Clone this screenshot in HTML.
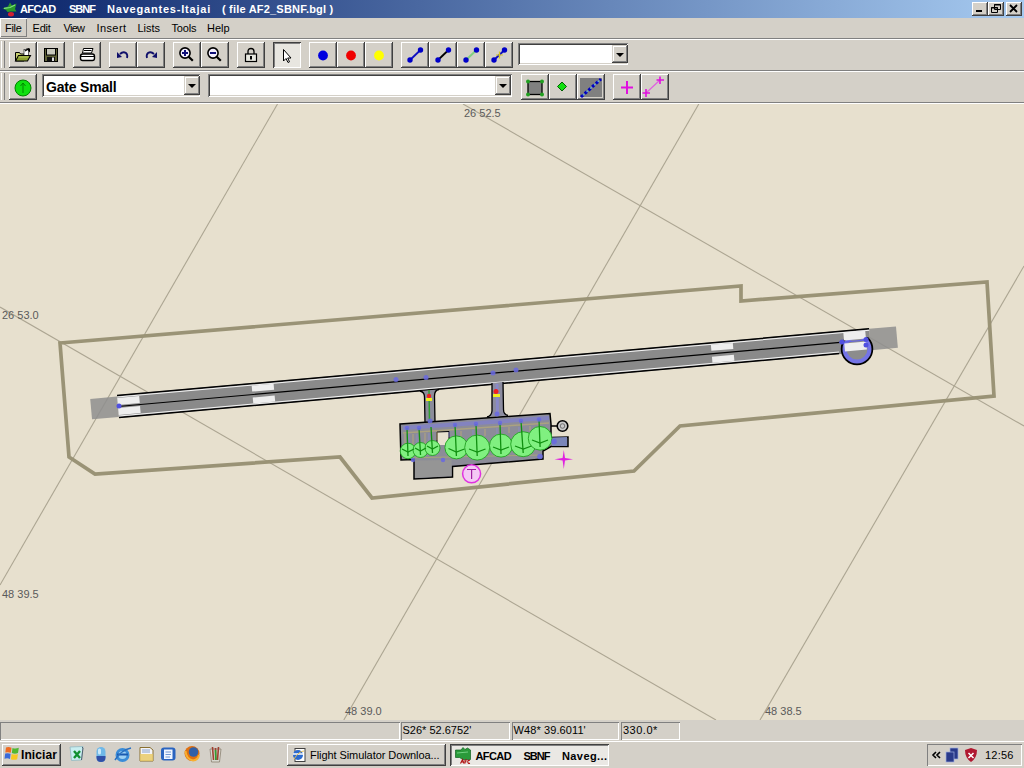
<!DOCTYPE html>
<html><head><meta charset="utf-8">
<style>
*{box-sizing:border-box}
html,body{margin:0;padding:0}
body{width:1024px;height:768px;overflow:hidden;position:relative;background:#D4D0C8;font-family:"Liberation Sans",sans-serif;font-size:11px;color:#000}
.a{position:absolute}
.t{position:absolute;white-space:nowrap;line-height:12px}
.btn{position:absolute;width:28px;height:26px;background:#D4D0C8;box-shadow:inset -1px -1px #404040,inset 1px 1px #fff,inset -2px -2px #808080}
.btn svg{position:absolute;left:0;top:0}
.prs{position:absolute;background:#E8E6E0;box-shadow:inset 1px 1px #404040,inset -1px -1px #fff,inset 2px 2px #808080}
.hl{position:absolute;left:0;width:1024px;height:1px}
.combo{position:absolute;background:#fff;box-shadow:inset 1px 1px #808080,inset -1px -1px #fff,inset 2px 2px #404040,inset -2px -2px #D4D0C8}
.dd{position:absolute;background:#D4D0C8;box-shadow:inset -1px -1px #404040,inset 1px 1px #D4D0C8,inset -2px -2px #808080,inset 2px 2px #fff}
.dd:after{content:"";position:absolute;left:4px;top:8px;border-left:4px solid transparent;border-right:4px solid transparent;border-top:4px solid #000}
.wb{position:absolute;top:2px;width:16px;height:14px;background:#D4D0C8;box-shadow:inset -1px -1px #404040,inset 1px 1px #fff,inset -2px -2px #808080}
.pane{position:absolute;top:722px;height:18px;box-shadow:inset 1px 1px #808080,inset -1px -1px #fff}
.tb{position:absolute;top:744px;height:22px;background:#D4D0C8;box-shadow:inset -1px -1px #404040,inset 1px 1px #fff,inset -2px -2px #808080}
</style></head><body>

<!-- title bar -->
<div class="a" style="left:0;top:0;width:1024px;height:18px;background:linear-gradient(to right,#0A246A,#A6CAF0)"></div>
<svg class="a" style="left:0;top:0" width="20" height="18" viewBox="0 0 20 18">
<path d="M2.5 8.5 L8 6.5 L10 2.5 L12 5.5 L16.5 3.5 L15 9 L16.5 11.5 L11 11.5 L7.5 12 L6 10 Z" fill="#2A9A2A"/>
<path d="M4 8.3 L10 7.5 L15 5" stroke="#80E080" stroke-width="1.2" fill="none"/>
<ellipse cx="11" cy="14.3" rx="3" ry="2.2" fill="#D02030"/>
</svg>
<div class="t" style="left:20px;top:3px;color:#fff;font-weight:bold;letter-spacing:-0.6px">AFCAD</div>
<div class="t" style="left:69px;top:3px;color:#fff;font-weight:bold;letter-spacing:-1px">SBNF</div>
<div class="t" style="left:107px;top:3px;color:#fff;font-weight:bold;letter-spacing:0.8px">Navegantes-Itajai</div>
<div class="t" style="left:222px;top:3px;color:#fff;font-weight:bold;letter-spacing:0.2px">( file AF2_SBNF.bgl )</div>
<div class="wb" style="left:972px"><div class="a" style="left:4px;top:8px;width:6px;height:2px;background:#000"></div></div>
<div class="wb" style="left:988px"><svg class="a" style="left:0;top:0" width="16" height="14"><path d="M6.5 2.5h6v5h-6z M6 3h7 M3.5 5.5h6v5h-6z M3 6h7" fill="none" stroke="#000" stroke-width="1"/></svg></div>
<div class="wb" style="left:1006px"><svg class="a" style="left:0;top:0" width="16" height="14"><path d="M4 3 L11 10 M11 3 L4 10" stroke="#000" stroke-width="1.8"/></svg></div>

<!-- menu bar -->
<div class="a" style="left:0;top:18px;width:27px;height:19px;box-shadow:inset 1px 1px #fff,inset -1px -1px #808080"></div>
<div class="t" style="left:5px;top:22px;letter-spacing:-0.3px">File</div>
<div class="t" style="left:32.5px;top:22px;letter-spacing:-0.2px">Edit</div>
<div class="t" style="left:63.5px;top:22px;letter-spacing:-0.7px">View</div>
<div class="t" style="left:96.5px;top:22px;letter-spacing:0.4px">Insert</div>
<div class="t" style="left:137.5px;top:22px">Lists</div>
<div class="t" style="left:171.5px;top:22px;letter-spacing:-0.2px">Tools</div>
<div class="t" style="left:207px;top:22px">Help</div>
<div class="hl" style="top:38px;background:#808080"></div>
<div class="hl" style="top:39px;background:#fff"></div>
<div class="hl" style="top:70px;background:#808080"></div>
<div class="hl" style="top:71px;background:#fff"></div>
<div class="hl" style="top:102px;background:#808080"></div>
<div class="hl" style="top:103px;background:#fff"></div>

<!-- toolbar1 grip -->
<div class="a" style="left:1px;top:41px;width:1px;height:27px;background:#fff"></div>
<div class="a" style="left:4px;top:41px;width:1px;height:27px;background:#808080"></div>
<div class="btn" style="left:9px;top:42px"><svg width="28" height="26" viewBox="-6 -6 28 26">
<path d="M0.5 13 L0.5 4.5 L4.5 4.5 L5.5 6 L9 6 L9 13 Z" fill="#C8D070" stroke="#000" stroke-width="1"/>
<rect x="9" y="1.5" width="4.5" height="6" fill="#fff" stroke="#404040" stroke-width="0.8"/>
<path d="M0.5 13 L3.5 7.5 H15.5 L12.5 13 Z" fill="#8CA030" stroke="#000" stroke-width="1.1"/>
<path d="M3.5 9 H13.5" stroke="#B8C860" stroke-width="1"/>
<path d="M11 0.5 L15 0.5 L15 4.5 Z" fill="#000"/><path d="M10 3 L14 0.5" stroke="#000" stroke-width="1.2"/>
</svg></div>
<div class="btn" style="left:37px;top:42px"><svg width="28" height="26" viewBox="-6 -6 28 26">
<rect x="1.5" y="0.5" width="13" height="13" fill="#5E6036" stroke="#000"/>
<rect x="3.5" y="0.5" width="9" height="6.5" fill="#C8C8BC" stroke="#000"/>
<rect x="4" y="9" width="8" height="4.5" fill="#101010"/>
<rect x="9" y="9.5" width="2" height="3.5" fill="#E0E0E0"/>
</svg></div>
<div class="btn" style="left:73px;top:42px"><svg width="28" height="26" viewBox="-6 -6 28 26">
<path d="M4.5 0.5 H14 L12.5 5 H3.5 Z" fill="#fff" stroke="#000"/>
<path d="M5 2.5 H12.5" stroke="#000"/>
<rect x="1.5" y="6" width="14" height="6.5" rx="2.2" fill="#fff" stroke="#000" stroke-width="1.4"/>
<path d="M2 8.5 H15" stroke="#000"/>
<path d="M3 12.5 H14" stroke="#000"/>
</svg></div>
<div class="btn" style="left:109px;top:42px"><svg width="28" height="26" viewBox="-6 -6 28 26">
<path d="M5 6 Q8 3 11 5 Q13 7 12 10" fill="none" stroke="#10106A" stroke-width="1.8"/>
<path d="M2 4 L7 9 L2 10 Z" fill="#10106A"/>
</svg></div>
<div class="btn" style="left:137px;top:42px"><svg width="28" height="26" viewBox="-6 -6 28 26">
<path d="M11 6 Q8 3 5 5 Q3 7 4 10" fill="none" stroke="#10106A" stroke-width="1.8"/>
<path d="M14 4 L9 9 L14 10 Z" fill="#10106A"/>
</svg></div>
<div class="btn" style="left:173px;top:42px"><svg width="28" height="26" viewBox="-6 -6 28 26">
<circle cx="6" cy="5" r="5.1" fill="#F4F0FF" stroke="#000" stroke-width="1.6"/>
<path d="M6 2 V8 M3 5 H9" stroke="#10107A" stroke-width="2"/>
<path d="M9.7 8.7 L13.8 12.8" stroke="#000" stroke-width="2.2"/>
</svg></div>
<div class="btn" style="left:201px;top:42px"><svg width="28" height="26" viewBox="-6 -6 28 26">
<circle cx="6" cy="5" r="5.1" fill="#F4F0FF" stroke="#000" stroke-width="1.6"/>
<path d="M3 5 H9" stroke="#10107A" stroke-width="2"/>
<path d="M9.7 8.7 L13.8 12.8" stroke="#000" stroke-width="2.2"/>
</svg></div>
<div class="btn" style="left:237px;top:42px"><svg width="28" height="26" viewBox="-6 -6 28 26">
<path d="M5 6 V3.5 Q5 0.5 8 0.5 Q11 0.5 11 3.5 V6" fill="none" stroke="#000" stroke-width="1.3"/>
<rect x="2.5" y="6" width="11" height="7.5" fill="#E8E8E0" stroke="#000" stroke-width="1.2"/>
<rect x="7" y="8" width="2" height="3.5" fill="#000"/>
</svg></div>
<div class="prs" style="left:273px;top:42px;width:28px;height:26px"><svg class="a" style="left:0;top:0" width="28" height="26" viewBox="-6 -6 28 26">
<path d="M4.5 1.5 V13 L7 10.5 L9 14.5 L10.5 13.8 L8.7 10 H12 Z" fill="#fff" stroke="#000" stroke-width="1"/>
</svg></div>
<div class="btn" style="left:309px;top:42px"><svg width="28" height="26" viewBox="-6 -6 28 26"><circle cx="8" cy="7.5" r="4.9" fill="#0000E0"/></svg></div>
<div class="btn" style="left:337px;top:42px"><svg width="28" height="26" viewBox="-6 -6 28 26"><circle cx="8" cy="7.5" r="4.9" fill="#F00000"/></svg></div>
<div class="btn" style="left:365px;top:42px"><svg width="28" height="26" viewBox="-6 -6 28 26"><circle cx="8" cy="7.5" r="4.9" fill="#FFFF00"/></svg></div>
<div class="btn" style="left:401px;top:42px"><svg width="28" height="26" viewBox="-6 -6 28 26"><path d="M3 12 L13.5 2" stroke="#1010C0" stroke-width="1.8"/><circle cx="3" cy="12" r="2.7" fill="#0000C8"/><circle cx="13.5" cy="2" r="2.7" fill="#0000C8"/></svg></div>
<div class="btn" style="left:429px;top:42px"><svg width="28" height="26" viewBox="-6 -6 28 26"><path d="M3 12 L13.5 2" stroke="#000" stroke-width="1.8"/><circle cx="3" cy="12" r="2.7" fill="#0000C8"/><circle cx="13.5" cy="2" r="2.7" fill="#0000C8"/></svg></div>
<div class="btn" style="left:457px;top:42px"><svg width="28" height="26" viewBox="-6 -6 28 26"><path d="M3 12 L13.5 2" stroke="#80D080" stroke-width="2"/><circle cx="3" cy="12" r="2.7" fill="#0000C8"/><circle cx="13.5" cy="2" r="2.7" fill="#0000C8"/></svg></div>
<div class="btn" style="left:485px;top:42px"><svg width="28" height="26" viewBox="-6 -6 28 26"><path d="M3 12 L13.5 2" stroke="#1010C0" stroke-width="1.8"/><path d="M8.5 3.5 V10.5 M5 7 H12" stroke="#D8C820" stroke-width="1.2"/><circle cx="3" cy="12" r="2.7" fill="#0000C8"/><circle cx="13.5" cy="2" r="2.7" fill="#0000C8"/></svg></div>
<div class="combo" style="left:518px;top:43px;width:110px;height:22px"></div>
<div class="dd" style="left:612px;top:45px;width:16px;height:18px"></div>

<!-- toolbar2 -->
<div class="a" style="left:1px;top:73px;width:1px;height:27px;background:#fff"></div>
<div class="a" style="left:4px;top:73px;width:1px;height:27px;background:#808080"></div>
<div class="btn" style="left:9px;top:74px"><svg width="28" height="26" viewBox="0 0 28 26">
<circle cx="14" cy="14" r="8" fill="#10E010" stroke="#008000" stroke-width="1"/>
<path d="M14 19 V9 M11.5 12 L14 9 L16.5 12" fill="none" stroke="#008800" stroke-width="1"/>
</svg></div>
<div class="combo" style="left:42px;top:74px;width:158px;height:23px"></div>
<div class="t" style="left:46px;top:79.5px;font-weight:bold;font-size:14px;line-height:15px;letter-spacing:-0.2px">Gate Small</div>
<div class="dd" style="left:184px;top:76px;width:16px;height:19px"></div>
<div class="combo" style="left:208px;top:74px;width:304px;height:23px"></div>
<div class="dd" style="left:495px;top:76px;width:16px;height:19px"></div>
<div class="btn" style="left:521px;top:74px"><svg width="28" height="26" viewBox="0 0 28 26">
<rect x="7" y="7.5" width="14" height="13" fill="#808080" stroke="#000" stroke-width="1.3"/>
<circle cx="7" cy="7.5" r="2" fill="#20A020"/><circle cx="21" cy="7.5" r="2" fill="#20A020"/><circle cx="7" cy="20.5" r="2" fill="#20A020"/><circle cx="21" cy="20.5" r="2" fill="#20A020"/>
</svg></div>
<div class="btn" style="left:549px;top:74px"><svg width="28" height="26" viewBox="0 0 28 26">
<path d="M13 8 L17.5 12.5 L13 17 L8.5 12.5 Z" fill="#10E010" stroke="#006000" stroke-width="1"/>
</svg></div>
<div class="btn" style="left:577px;top:74px"><svg width="28" height="26" viewBox="0 0 28 26">
<rect x="3" y="4" width="22" height="19" fill="#808080"/>
<path d="M4 23 L24 5" stroke="#0000C0" stroke-width="3" stroke-dasharray="3 2"/>
<path d="M4 23 L24 5" stroke="#60B0E0" stroke-width="1.2" stroke-dasharray="2 3" stroke-dashoffset="2.5"/>
</svg></div>
<div class="btn" style="left:613px;top:74px"><svg width="28" height="26" viewBox="0 0 28 26">
<path d="M14 7 V20 M8 13.5 H20" stroke="#E010E0" stroke-width="2"/>
</svg></div>
<div class="btn" style="left:641px;top:74px"><svg width="28" height="26" viewBox="0 0 28 26">
<path d="M5 19 L19 6" stroke="#E060E0" stroke-width="1.2"/>
<path d="M19 2.5 V10 M15.5 6 H23 M5 15 V23 M1.5 19 H9" stroke="#E010E0" stroke-width="1.6"/>
</svg></div>

<!-- map -->
<svg class="a" style="left:0;top:104px" width="1024" height="616" viewBox="0 104 1024 616">
<rect x="0" y="104" width="1024" height="616" fill="#E7E0CE"/>
<g stroke="#ACA592" stroke-width="1.1" fill="none">
<path d="M277.5 104 L0 585"/>
<path d="M698.8 104 L343.8 720"/>
<path d="M1024 266 L760 720"/>
<path d="M463 104 L1024 426"/>
<path d="M0 307 L716 720"/>
</g>
<polygon points="60,343 741,286 741,301 987,282 994,396 680,426 634,471 372,498 340,457 95,474 69,457" fill="none" stroke="#9A9376" stroke-width="3.7" stroke-linejoin="miter"/>
<!-- runway -->
<defs><clipPath id="cb"><rect x="820" y="337" width="80" height="40"/></clipPath></defs>
<g transform="translate(118 406.5) rotate(-5.071)">
<rect x="-27" y="-10" width="27" height="20.5" fill="#8E8E8E" fill-opacity="0.85"/>
<rect x="755" y="-11" width="27" height="21.5" fill="#8E8E8E" fill-opacity="0.85"/>
<rect x="0" y="-11.5" width="755" height="23" fill="#8A8A8A"/>
</g>
<g clip-path="url(#cb)">
<circle cx="857" cy="349" r="15" fill="#8C8C8C" stroke="#000" stroke-width="2.5"/>
<circle cx="857" cy="349" r="12.5" fill="none" stroke="#7474E6" stroke-width="4"/>
</g>
<g transform="translate(118 406.5) rotate(-5.071)">
<path d="M0 -11 H755 M0 11 H723" stroke="#000" stroke-width="1.5"/>
<path d="M0 -9.5 H755 M0 9.5 H723" stroke="#F4F4F4" stroke-width="1"/>
<path d="M0 0 H728" stroke="#000" stroke-width="1.2"/>
<g fill="#EEEEEE">
<rect x="0" y="-8.5" width="22" height="7"/><rect x="0" y="1.5" width="22" height="7"/>
<rect x="135" y="-9" width="22" height="6"/><rect x="135" y="3" width="22" height="6"/>
<rect x="596" y="-9" width="22" height="6"/><rect x="596" y="3" width="22" height="6"/>
<rect x="729" y="-9.5" width="22" height="8"/><rect x="729" y="1.5" width="22" height="8"/>
</g>
<path d="M724 0 H750" stroke="#6464E0" stroke-width="1.2"/>
</g>
<g fill="#5050E0"><circle cx="119" cy="406" r="2.5"/><circle cx="842" cy="342" r="2.5"/><circle cx="866" cy="339.5" r="2.5"/><circle cx="866" cy="345" r="2.5"/></g>
<!-- taxiways -->
<path d="M420 391 Q424.5 392 424.5 397 L425 423 L435 422 L434.5 396 Q434.5 390 439 389.5 Z" fill="#8C8C9A"/>
<path d="M420 391 Q424.5 392 424.5 397 L425 423 M439 389.5 Q434.5 390 434.5 396 L435 422" fill="none" stroke="#000" stroke-width="1.3"/>
<path d="M492 383 L492 411 Q491.5 416 487 417 L508 415.5 Q503.5 414.5 503.5 409.5 L503 382 Z" fill="#8C8CA0"/>
<path d="M492 383 L492 411 Q491.5 416 487 417 M508 415.5 Q503.5 414.5 503.5 409.5 L503 382" fill="none" stroke="#000" stroke-width="1.3"/>
<path d="M497 384 L497.5 414" stroke="#8888D8" stroke-width="3" stroke-opacity="0.7"/>
<!-- apron -->
<polygon points="400,424 550,413.5 551,424 551,437.5 568,437 568,446.5 551,446.5 543,451 543,459 452.5,466.5 452.5,477 414,479 414,459.5 401,460" fill="#8C8C98" stroke="#000" stroke-width="1.5"/>
<path d="M552 437.5 L567 437 L567 446 L552 446" fill="#7A86B8"/>
<path d="M415 460.5 L451.5 460 L451.5 476 L415 478 Z" fill="#959595"/>
<path d="M437 445 L437 432 L449 431.5 L449 445" fill="#E7E0CE" stroke="#000" stroke-width="1"/>
<path d="M403 428 L549 418" stroke="#7C7CE0" stroke-width="4" stroke-opacity="0.55"/>
<path d="M403 433 L549 423" stroke="#C0B070" stroke-width="1.5" stroke-opacity="0.6"/>
<g stroke-width="1.2" stroke-opacity="0.55">
<path d="M405 434 V446 M413 434 V446 M425 433 V445 M437 432 V440 M461 431 V437 M485 429 V436 M509 427 V433 M530 426 V431" stroke="#C8B070"/>
<path d="M409 434 V446 M417 434 V446 M429 433 V445 M449 432 V437 M473 430 V437 M497 428 V434 M519 427 V433" stroke="#8A8AD8"/>
</g>
<path d="M404 458 L540 455" stroke="#C0C060" stroke-width="1" stroke-opacity="0.5"/>
<path d="M551 426 L557.5 426" stroke="#000" stroke-width="1.5"/>
<circle cx="562.5" cy="426" r="5.3" fill="#C8C8C8" stroke="#000" stroke-width="1.6"/>
<circle cx="562.5" cy="426" r="2.3" fill="none" stroke="#707070" stroke-width="1"/>
<g fill="#80F080" stroke="#20A020" stroke-width="0.9">
<circle cx="408" cy="451" r="7.8"/><circle cx="420.5" cy="450" r="7.5"/><circle cx="432.5" cy="448" r="7.5"/>
<circle cx="456.4" cy="447.4" r="11.5"/><circle cx="477.2" cy="447.6" r="12.5"/><circle cx="501" cy="445.6" r="11.5"/>
<circle cx="523.2" cy="444.2" r="12.5"/><circle cx="540.1" cy="438.3" r="11.8"/>
</g>
<g stroke="#109010" stroke-width="1.3" fill="none">
<path d="M407 428 L408 456 M419 428 L420.5 455 M431 427 L432.5 453 M455 424.5 L456.4 456 M476 424 L477.2 456 M500 423 L501 454 M521 421 L523.2 453 M539 419.5 L540.1 447"/>
<path d="M402 449 L408 452 L414 449 M415 448 L420.5 451 L426 448 M427 446 L432.5 449 L438 446"/>
<path d="M448.5 448.5 L456.4 452 L464.5 449 M469 449 L477.2 452 L485.5 449 M493 447 L501 450 L509 447 M515 446 L523.2 449 L531.5 446 M532 440 L540.1 443 L548 440"/>
</g>
<g stroke="#30A030" stroke-width="1.5"><path d="M429 390 L429.5 422"/></g>
<g fill="#6868E0" fill-opacity="0.85">
<circle cx="396" cy="379.5" r="2.5"/><circle cx="426" cy="377.5" r="2.5"/><circle cx="493" cy="373" r="2.5"/><circle cx="516" cy="370" r="2.5"/>
<circle cx="430" cy="421" r="2.5"/><circle cx="497" cy="414" r="2.5"/>
<circle cx="407" cy="428" r="2.2"/><circle cx="419" cy="428" r="2.2"/><circle cx="455" cy="425" r="2.2"/><circle cx="476" cy="424" r="2.2"/><circle cx="500" cy="423" r="2.2"/><circle cx="521" cy="421" r="2.2"/><circle cx="539" cy="419.5" r="2.2"/>
<circle cx="554" cy="441.5" r="2.8"/><circle cx="540" cy="456.5" r="2.8"/><circle cx="413" cy="460" r="2.2"/><circle cx="443" cy="460" r="2.2"/>
</g>
<circle cx="429" cy="396" r="2.2" fill="#F02020"/><rect x="426" y="398" width="6" height="3" fill="#F0F020"/>
<circle cx="496" cy="391.5" r="2.5" fill="#F02020"/><rect x="493" y="394" width="7" height="3" fill="#F0F020"/>
<circle cx="471.6" cy="473.8" r="9" fill="#F4C8F4" stroke="#E030E0" stroke-width="1.5"/>
<path d="M467 469.5 H476 M471.6 469.5 V479" stroke="#A020A0" stroke-width="1.2"/>
<path d="M563.8 450 L565 458 L573 459.3 L565 460.5 L563.8 469 L562.6 460.5 L554.5 459.3 L562.6 458 Z" fill="#E020E0"/>
</svg>
<div class="t" style="left:464px;top:107px;color:#5A5A5A">26 52.5</div>
<div class="t" style="left:2px;top:309px;color:#5A5A5A">26 53.0</div>
<div class="t" style="left:2px;top:588px;color:#5A5A5A">48 39.5</div>
<div class="t" style="left:345px;top:705px;color:#5A5A5A">48 39.0</div>
<div class="t" style="left:765px;top:705px;color:#5A5A5A">48 38.5</div>

<!-- status bar -->
<div class="pane" style="left:0;width:400px"></div>
<div class="pane" style="left:401px;width:109px"></div>
<div class="t" style="left:402.5px;top:724px">S26* 52.6752'</div>
<div class="pane" style="left:512px;width:107px"></div>
<div class="t" style="left:513.5px;top:724px;letter-spacing:0.1px">W48* 39.6011'</div>
<div class="pane" style="left:621px;width:59px"></div>
<div class="t" style="left:623px;top:724px;letter-spacing:0.5px">330.0*</div>

<!-- taskbar -->
<div class="hl" style="top:740px;background:#D4D0C8"></div>
<div class="hl" style="top:741px;background:#fff"></div>
<div class="tb" style="left:2px;width:59px"></div>
<svg class="a" style="left:4px;top:746px" width="16" height="15" viewBox="0 0 16 15">
<path d="M2 1.5 Q4.5 0.5 7.5 1.8 L6.8 6.8 Q4 5.6 1.3 6.6 Z" fill="#F06A20"/>
<path d="M8.5 2 Q11.5 3.2 14.8 1.8 L14 7 Q11 8.3 7.8 7 Z" fill="#50B830"/>
<path d="M1.2 7.6 Q4 6.6 6.6 7.8 L6 13 Q3.3 11.8 0.5 12.8 Z" fill="#3A6ADA"/>
<path d="M7.6 8 Q11 9.2 13.9 8 L13.2 13.2 Q10 14.4 6.9 13.2 Z" fill="#F8C820"/>
</svg>
<div class="t" style="left:21px;top:749px;font-weight:bold;font-size:12px;line-height:12px;letter-spacing:0.1px">Iniciar</div>
<!-- quick launch -->
<svg class="a" style="left:64px;top:742px" width="164" height="24" viewBox="64 742 164 24">
<path d="M70 747 L83 746.5 L81.5 760 L71.5 760.5 Z" fill="#C8EEF0" stroke="#90B8C0" stroke-width="0.8"/>
<path d="M74 751 L80 758 M80 751 L74 758" stroke="#109030" stroke-width="2.4"/>
<path d="M82 747 L83 748 L81.5 760" stroke="#506070" stroke-width="1" fill="none"/>
<rect x="96.5" y="747" width="9" height="15" rx="4.5" fill="#6FB8E8"/>
<path d="M96.5 756 H105.5 V757.5 Q105.5 762 101 762 Q96.5 762 96.5 757.5 Z" fill="#3050A8"/>
<rect x="98" y="748.5" width="3" height="6" rx="1.5" fill="#C8E8FA"/>
<circle cx="122.5" cy="755" r="7" fill="#3A8CD8"/>
<circle cx="122.5" cy="755" r="4" fill="#9CD0F4"/>
<path d="M117 754.5 H128" stroke="#1A5AB0" stroke-width="2"/>
<path d="M115 760 Q121 750 131 748" stroke="#2A70C0" stroke-width="1.5" fill="none"/>
<path d="M140 747.5 H150 L153 750 V761 H140 Z" fill="#F4F4F8" stroke="#8A7030" stroke-width="1"/>
<rect x="140" y="754" width="13" height="7" fill="#E8C860" fill-opacity="0.8"/>
<path d="M142 750 H150 M142 752 H150" stroke="#7090C0" stroke-width="0.8"/>
<rect x="161" y="747.5" width="14.5" height="13" rx="3" fill="#2A64C0"/>
<rect x="164" y="749.5" width="8.5" height="9.5" fill="#F0F6FF"/>
<path d="M165.5 752 H171 M165.5 754.5 H171 M165.5 757 H170" stroke="#5080C8" stroke-width="0.8"/>
<circle cx="192" cy="753.5" r="7.5" fill="#E07010"/>
<circle cx="193.5" cy="752" r="4.8" fill="#3060A8"/>
<path d="M185.5 751 Q186 759 193 760.5 Q198 760 199 755" stroke="#F8B030" stroke-width="2" fill="none"/>
<path d="M210 749 H221 L219.5 762 H211.5 Z" fill="#D8D8D0" stroke="#8A8070" stroke-width="0.8"/>
<path d="M212.5 747 L213.5 760 M215.5 748 L215.8 760 M218.5 747 L217.5 760" stroke-width="1.6" fill="none" stroke="#A04030"/>
<path d="M215.5 750 L215.8 760" stroke="#30A030" stroke-width="1.6"/>
</svg>
<div class="tb" style="left:287px;width:159px"></div>
<svg class="a" style="left:291px;top:747px" width="16" height="16" viewBox="0 0 16 16"><rect x="4" y="1.5" width="10" height="13" fill="#fff" stroke="#404040"/><circle cx="7" cy="8" r="5" fill="#2A6AD0"/><path d="M2 7 H12" stroke="#fff" stroke-width="1.5"/><path d="M3 12 Q8 4 13 4" stroke="#E8C050" stroke-width="1" fill="none"/></svg>
<div class="t" style="left:310px;top:749px;letter-spacing:-0.07px">Flight Simulator Downloa...</div>
<div class="a" style="left:450px;top:744px;width:159px;height:22px;background:#EAE8E4;box-shadow:inset 1px 1px #404040,inset -1px -1px #fff,inset 2px 2px #808080"></div>
<svg class="a" style="left:454px;top:746px" width="18" height="19" viewBox="0 0 18 19"><path d="M1.5 4 L7 4 L9 1.5 L11 3.5 L13.5 2 L16.5 4 L16.5 13.5 L9 13.5 L5.5 11.5 L1.5 11.5 Z" fill="#2A9A3A" stroke="#106020" stroke-width="0.7"/><path d="M3 7 L14 6" stroke="#70D080" stroke-width="1"/><path d="M6.5 17.5 L8.5 13.5 L10 17.5 M7.3 16 H9.5 M11 14 V17.5 M11 14 H13 M11 15.8 H12.5 M16 14.2 Q13.5 14 13.8 16 Q14 17.8 16 17.3" stroke="#B01010" stroke-width="1.1" fill="none"/></svg>
<div class="t" style="left:475.5px;top:750px;font-weight:bold;letter-spacing:-0.6px">AFCAD</div>
<div class="t" style="left:523.5px;top:750px;font-weight:bold;letter-spacing:-1px">SBNF</div>
<div class="t" style="left:562px;top:750px;font-weight:bold;letter-spacing:0.4px">Naveg...</div>
<!-- tray -->
<div class="a" style="left:927px;top:744px;width:95px;height:22px;box-shadow:inset 1px 1px #808080,inset -1px -1px #fff"></div>
<svg class="a" style="left:931px;top:750px" width="10" height="10" viewBox="0 0 10 10"><path d="M5 2 L2 5 L5 8 M9 2 L6 5 L9 8" fill="none" stroke="#000" stroke-width="1.6"/></svg>
<svg class="a" style="left:944px;top:747px" width="16" height="16" viewBox="0 0 16 16"><rect x="6" y="1" width="8" height="11" fill="#2A3A8A" stroke="#A0B0E0" stroke-width="0.7"/><rect x="2" y="5" width="8" height="10" fill="#2A3A8A" stroke="#A0B0E0" stroke-width="0.7"/></svg>
<svg class="a" style="left:963px;top:747px" width="16" height="16" viewBox="0 0 16 16"><path d="M8 1 L14 3 Q14 11 8 15 Q2 11 2 3 Z" fill="#B01830"/><path d="M5.5 6 L10.5 11 M10.5 6 L5.5 11" stroke="#fff" stroke-width="1.5"/></svg>
<div class="t" style="left:985px;top:749px;letter-spacing:0.2px">12:56</div>

</body></html>
